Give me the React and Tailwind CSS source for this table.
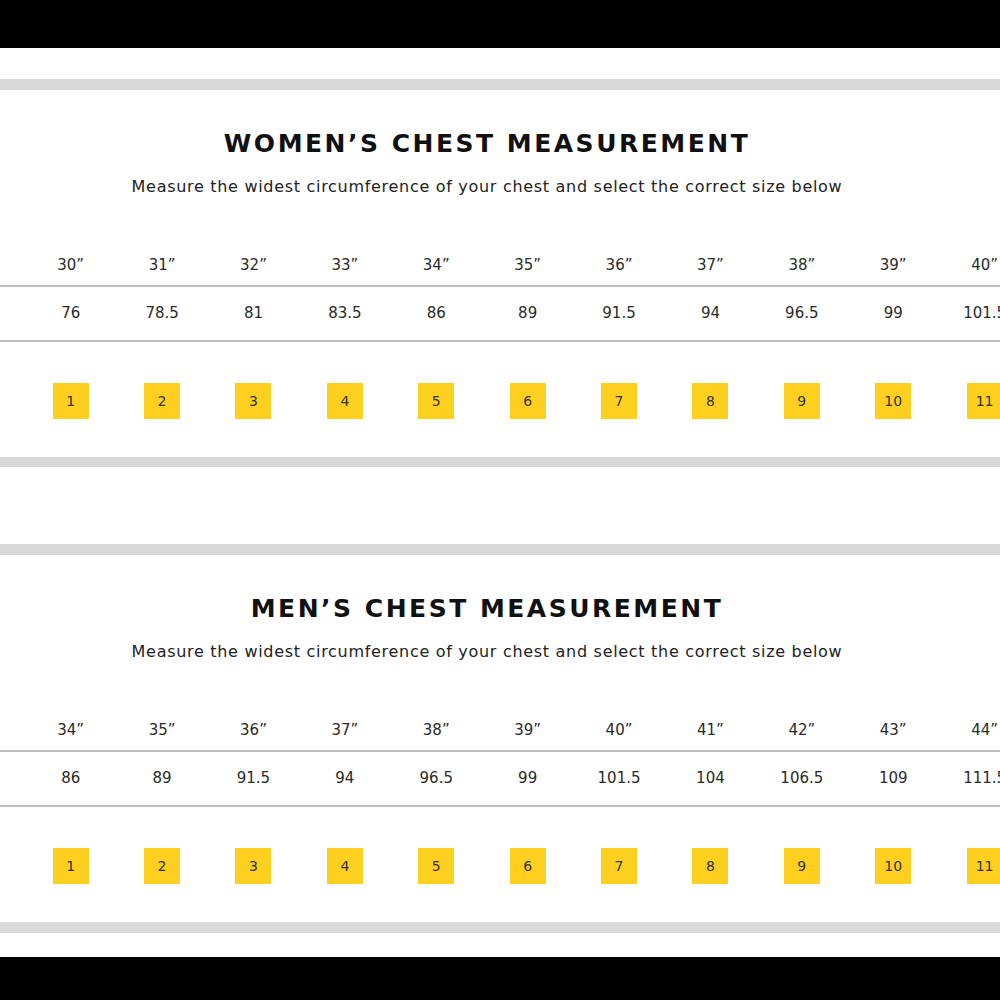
import React from 'react'

const women = {
  title: 'WOMEN’S CHEST MEASUREMENT',
  inches: ['30”', '31”', '32”', '33”', '34”', '35”', '36”', '37”', '38”', '39”', '40”'],
  cm: ['76', '78.5', '81', '83.5', '86', '89', '91.5', '94', '96.5', '99', '101.5'],
}

const men = {
  title: 'MEN’S CHEST MEASUREMENT',
  inches: ['34”', '35”', '36”', '37”', '38”', '39”', '40”', '41”', '42”', '43”', '44”'],
  cm: ['86', '89', '91.5', '94', '96.5', '99', '101.5', '104', '106.5', '109', '111.5'],
}

const sizes = ['1', '2', '3', '4', '5', '6', '7', '8', '9', '10', '11']

function Row({ items, className }) {
  return (
    <div className={`flex pl-[25px] whitespace-nowrap ${className}`}>
      {items.map((v, i) => (
        <div key={i} className="w-[91.4px] shrink-0 flex items-center justify-center">
          {v}
        </div>
      ))}
    </div>
  )
}

function Chart({ data }) {
  return (
    <section>
      <div className="h-[11px] bg-[#d8d9d8]" />
      <div className="w-[974px] pt-[39px] text-center">
        <h2 className="h-[30px] leading-[30px] text-[25px] font-bold tracking-[2.5px] text-[#111]">
          {data.title}
        </h2>
        <p className="mt-[17px] h-[22px] leading-[22px] text-[16px] tracking-[0.7px] text-[#222]">
          Measure the widest circumference of your chest and select the correct size below
        </p>
      </div>
      <Row items={data.inches} className="mt-[47px] h-[42px] border-b-2 border-[#bdbdbd] text-[15px] text-[#2a2a2a]" />
      <Row items={data.cm} className="h-[55px] border-b-2 border-[#bdbdbd] text-[15px] text-[#2a2a2a]" />
      <div className="flex pl-[25px] mt-[41px] mb-[38px]">
        {sizes.map((s) => (
          <div key={s} className="w-[91.4px] shrink-0 flex justify-center">
            <div className="w-[36px] h-[36px] bg-[#fdd020] flex items-center justify-center text-[14px] font-medium text-[#333]">
              {s}
            </div>
          </div>
        ))}
      </div>
    </section>
  )
}

export default function App() {
  return (
    <div
      className="w-[1000px] h-[1000px] overflow-hidden bg-white"
      style={{ fontFamily: '"DejaVu Sans", "Open Sans", sans-serif' }}
    >
      <div className="h-[48px] bg-black" />
      <div className="h-[31px]" />
      <Chart data={women} />
      <div className="h-[10px] bg-[#d8d9d8]" />
      <div className="h-[77px]" />
      <Chart data={men} />
      <div className="h-[11px] bg-[#d8d9d8]" />
      <div className="h-[24px]" />
      <div className="h-[43px] bg-black" />
    </div>
  )
}
